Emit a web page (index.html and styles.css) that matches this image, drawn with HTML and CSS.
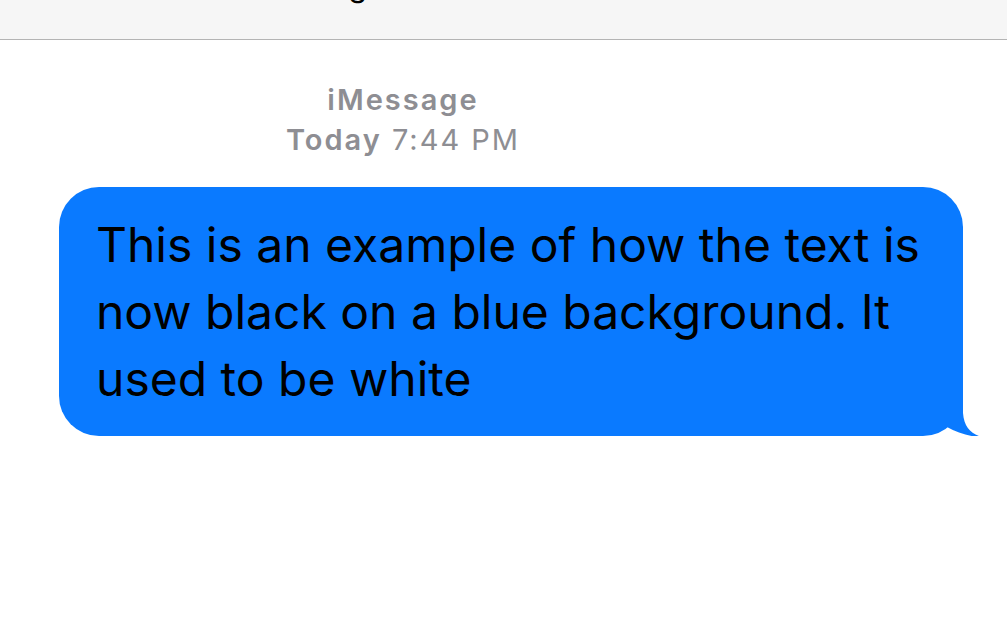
FILE: index.html
```html
<!DOCTYPE html>
<html>
<head>
<meta charset="utf-8">
<link rel="stylesheet" href="styles.css">
</head>
<body>
<header class="topbar">
  <div class="title">Megan Garner ›</div>
</header>
<main class="thread">
  <div class="meta">
    <div class="service">iMessage</div>
    <div class="time"><b>Today</b> 7:44 PM</div>
  </div>
  <div class="row">
    <div class="bubble">
      This is an example of how the text is now black on a blue background. It used to be white
      <svg class="tail" viewBox="0 0 60 50" width="60" height="50" aria-hidden="true">
        <path d="M40 0 L40 26 C41 40 48 47 59 50 C50 50.5 35 46 24 40 L24 0 Z" fill="#0a7aff"/>
      </svg>
    </div>
  </div>
</main>
</body>
</html>
```
FILE: styles.css
```css
html, body {
  margin: 0;
  padding: 0;
  background: #ffffff;
  font-family: Inter, "Liberation Sans", Arial, sans-serif;
}

.topbar {
  height: 39px;
  background: #f6f6f6;
  border-bottom: 1px solid #b4b4b4;
  overflow: hidden;
  display: flex;
  justify-content: flex-start;
}

.title {
  margin-left: 304px;
  margin-top: -32px;
  font-size: 30px;
  line-height: 36px;
  color: #000;
}

.thread {
  display: flex;
  flex-direction: column;
}

.meta {
  margin-left: 263px;
  width: 280px;
  margin-top: 40px;
  text-align: center;
  color: #8e8e93;
  font-size: 29px;
  letter-spacing: 2px;
  line-height: 40px;
}

.service {
  font-weight: 600;
}

.time b {
  font-weight: 600;
}

.row {
  margin-top: 27px;
  padding-left: 59px;
}

.bubble {
  position: relative;
  width: 904px;
  box-sizing: border-box;
  padding: 24px 30px 30px 37px;
  background: #0a7aff;
  border-radius: 40px;
  color: #000;
  font-size: 48px;
  line-height: 67px;
  height: 249px;
}

.tail {
  position: absolute;
  right: -20px;
  bottom: -1px;
  display: block;
}
```
